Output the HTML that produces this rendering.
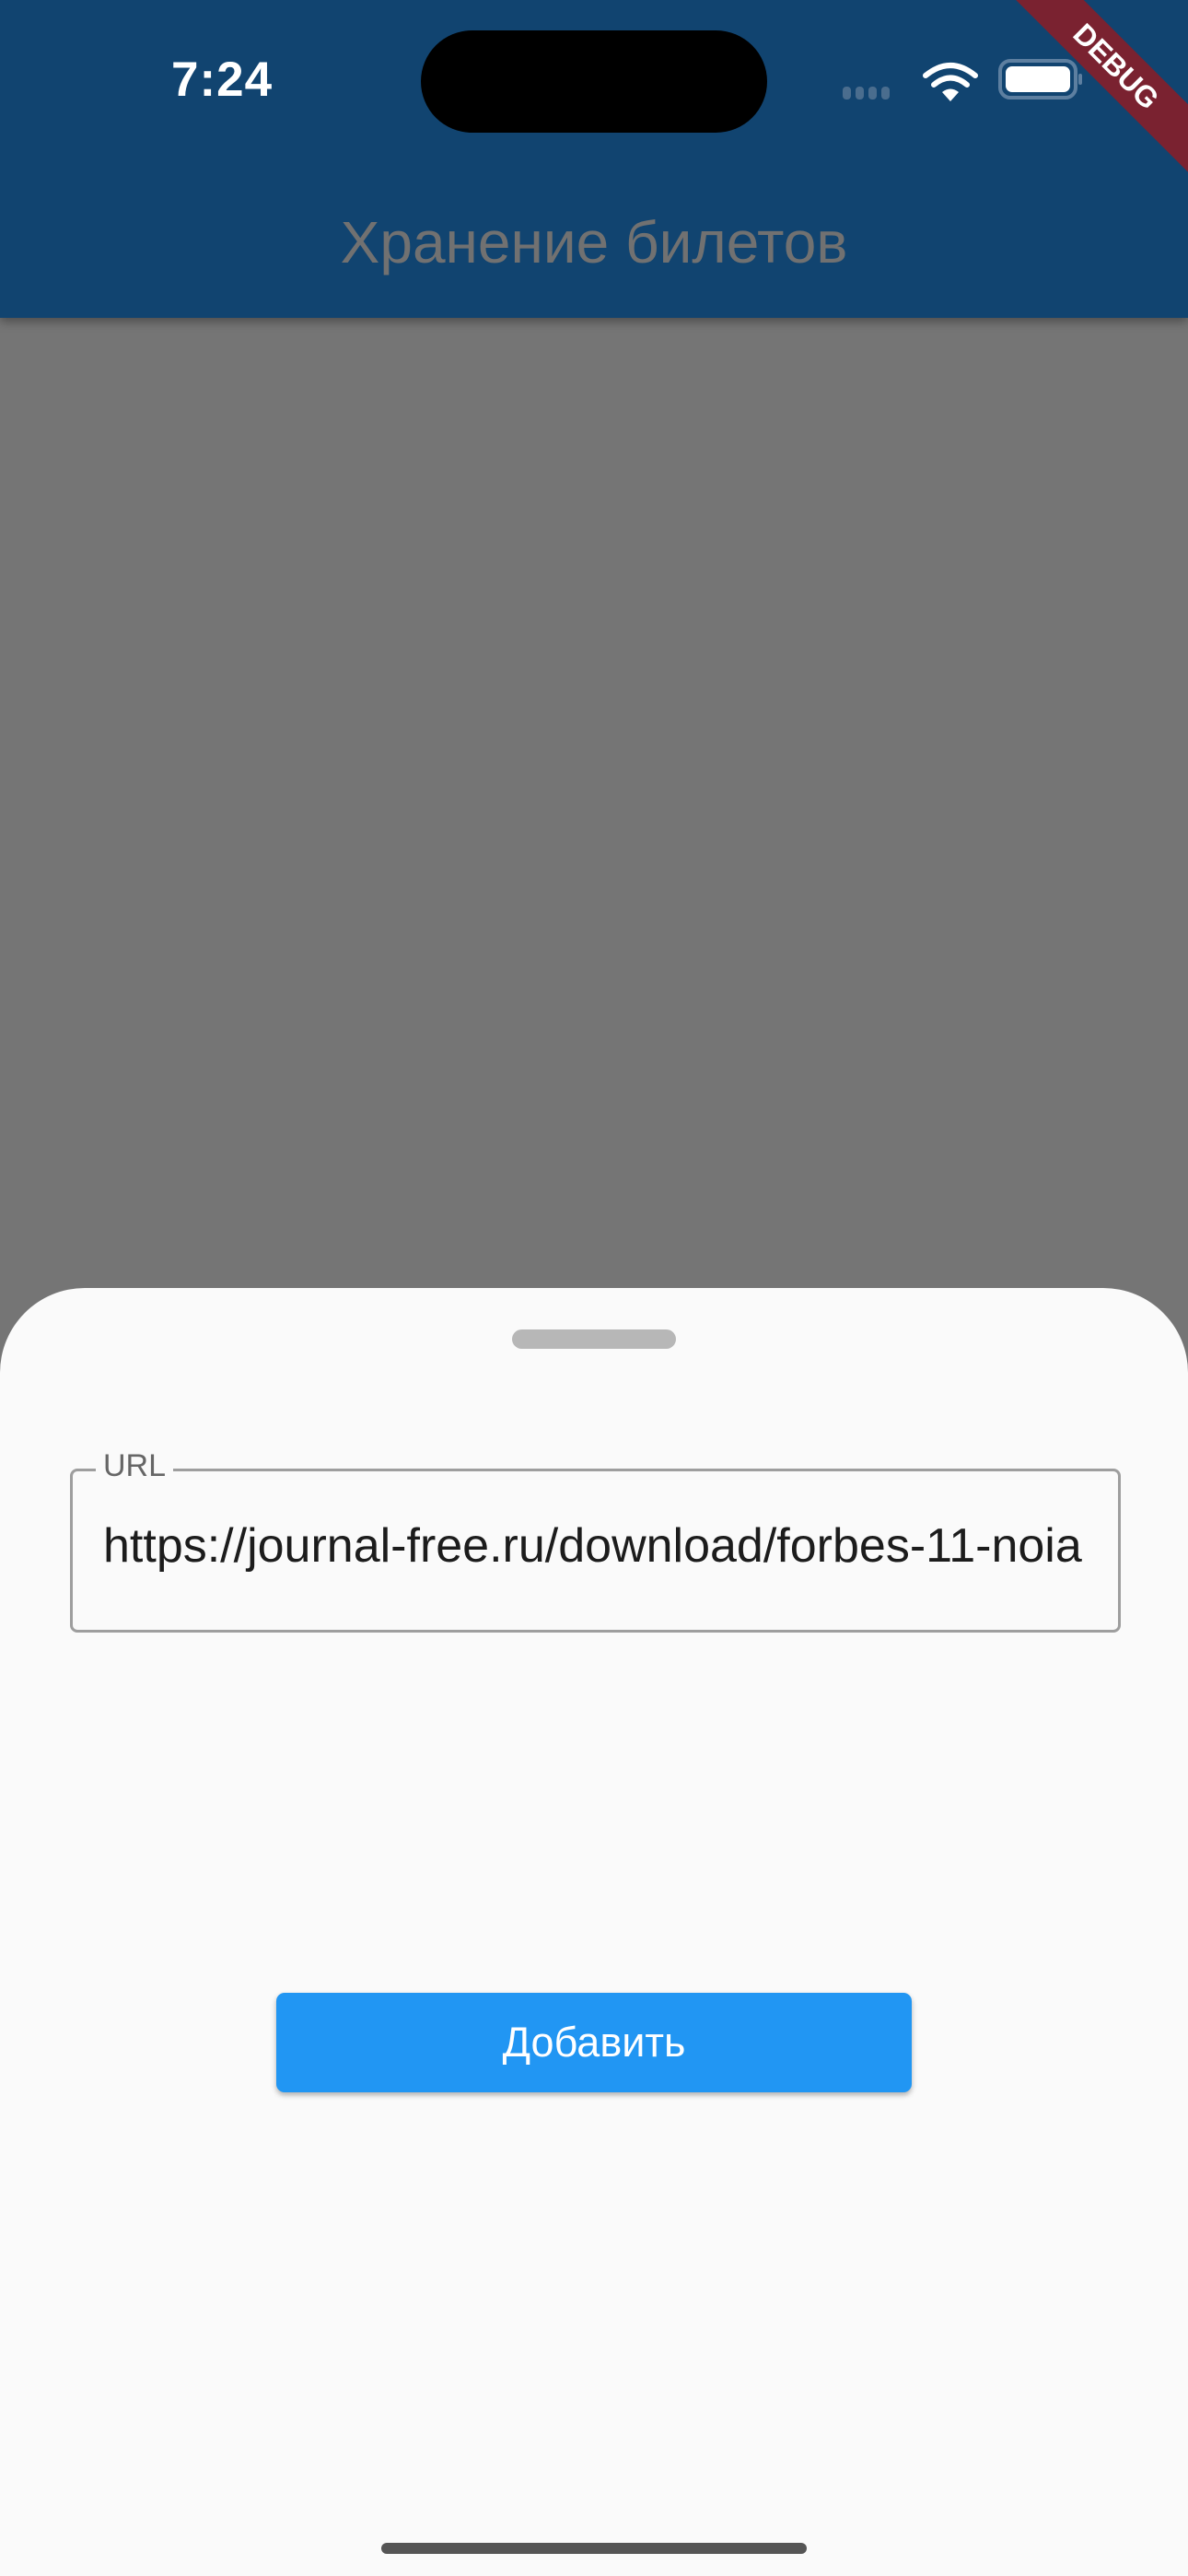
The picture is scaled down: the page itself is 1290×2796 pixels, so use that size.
<!DOCTYPE html>
<html><head><meta charset="utf-8"><style>
html,body{margin:0;padding:0}
body{width:1290px;height:2796px;position:relative;overflow:hidden;background:#757575;font-family:"Liberation Sans","DejaVu Sans",sans-serif}
.bar{position:absolute;left:0;top:0;width:1290px;height:345px;background:#114470;box-shadow:0 4px 10px rgba(0,0,0,.35)}
.time{position:absolute;left:186px;top:56px;font-size:53px;font-weight:bold;color:#fff;letter-spacing:1px}
.island{position:absolute;left:457px;top:33px;width:376px;height:111px;border-radius:56px;background:#000}
.title{position:absolute;left:0;width:1290px;top:226px;text-align:center;font-size:64px;color:#717171}
.sheet{position:absolute;left:0;top:1398px;width:1290px;height:1398px;background:#fafafa;border-radius:92px 92px 0 0}
.handle{position:absolute;left:556px;top:1443px;width:178px;height:21px;border-radius:11px;background:#b7b7b7}
.field{position:absolute;left:76px;top:1594px;width:1135px;height:172px;border:3px solid #9e9e9e;border-radius:8px}
.lbl{position:absolute;left:104px;top:1572px;padding:0 8px;background:#fafafa;font-size:34px;color:#666}
.url{position:absolute;left:112px;top:1648px;font-size:52px;color:#1c1c1c;white-space:nowrap}
.btn{position:absolute;left:300px;top:2163px;width:690px;height:108px;background:#2196f3;border-radius:9px;box-shadow:0 3px 6px rgba(0,0,0,.3);color:#fff;font-size:45px;text-align:center;line-height:108px}
.home{position:absolute;left:414px;top:2760px;width:462px;height:12px;border-radius:6px;background:#555}
.debug{position:absolute;right:-72px;top:46px;width:300px;height:52px;background:#7a2230;transform:rotate(45deg);color:#fff;font-weight:bold;font-size:32px;text-align:center;line-height:52px}
</style></head><body>
<div class="bar">
<div class="time">7:24</div>
<div class="island"></div>
<svg style="position:absolute;left:915px;top:62px" width="260" height="50" viewBox="0 0 260 50">
<g fill="#4a6d8e"><rect x="0" y="32" width="9" height="14" rx="4"/><rect x="14" y="32" width="9" height="14" rx="4"/><rect x="28" y="32" width="9" height="14" rx="4"/><rect x="42" y="32" width="9" height="14" rx="4"/></g>
<g fill="none" stroke="#fff" stroke-width="6" stroke-linecap="round"><path d="M90 20 Q117 -2 144 20"/><path d="M99 30 Q117 15 135 30"/></g>
<path d="M108 38 L117 48 L126 38 Q117 31 108 38Z" fill="#fff"/>
<rect x="171" y="4" width="82" height="40" rx="11" fill="none" stroke="#5d7fa0" stroke-width="4"/>
<rect x="177" y="10" width="70" height="28" rx="7" fill="#fff"/>
<rect x="256" y="18" width="4" height="12" rx="2" fill="#5d7fa0"/>
</svg>
<div class="title">Хранение билетов</div>
</div>
<div class="debug">DEBUG</div>
<div class="sheet"></div>
<div class="handle"></div>
<div class="field"></div>
<div class="lbl">URL</div>
<div class="url">https://journal-free.ru/download/forbes-11-noia</div>
<div class="btn">Добавить</div>
<div class="home"></div>
</body></html>
